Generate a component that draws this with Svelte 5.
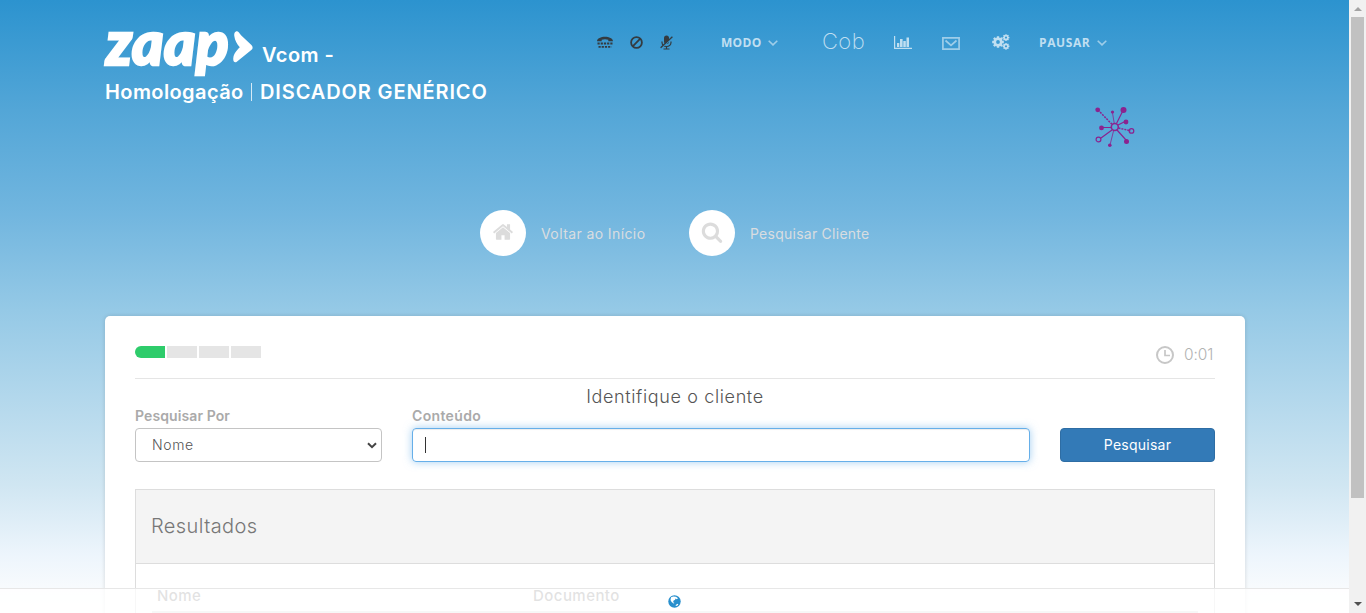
<script>
  const steps = [true, false, false, false];
  const teeth = [0, 45, 90, 135, 180, 225, 270, 315];
</script>

{#snippet chevron()}
  <svg class="chev" width="10" height="6" viewBox="0 0 10 6"><path d="M.7 .7 5 4.9 9.3 .7" fill="none" stroke="currentColor" stroke-width="1.6" /></svg>
{/snippet}

{#snippet gear(x, y, s)}
  <g transform="translate({x} {y}) scale({s})">
    {#each teeth as angle}
      <rect x="-1.25" y="-6" width="2.5" height="3" rx=".3" transform="rotate({angle})" />
    {/each}
    <circle r="3.3" fill="none" stroke="currentColor" stroke-width="2.7" />
  </g>
{/snippet}

<div class="window">
  <div class="page">
    <header>
      <div class="brand">
        <div class="line first">
          <span class="logo">zaap</span>
          <svg class="arrow" width="20" height="32" viewBox="0 0 20 32"><path d="M3 .4C1.400 1 1 3 1.300 5c.6 4.500 2.500 8 5.500 11.300C4 19 .8 22.500.300 27c-.4 3.500 1.400 5.200 3.500 3.700l14.500-11.600c1.800-1.500 1.700-3.400.1-5.100L8.300 4.400C6.300 2.200 5.100-.3 3 .4Z" fill="#fff" /></svg>
          <span class="vcom">Vcom -</span>
        </div>
        <div class="line second"><b class="homo">Homologação</b><i></i><b class="disc">DISCADOR GENÉRICO</b></div>
      </div>
      <div class="right">
        <nav>
          <svg class="dark tty" width="16" height="12" viewBox="0 0 16 12"><path d="M0 5.300C.1-.9 15.900-.9 16 5.300H11.300V3.700Q8 2.700 4.700 3.700V5.300Z" fill="currentColor" /><path d="M.5 7.500h15M1.500 10.900h13" stroke="currentColor" stroke-width="1.900" stroke-dasharray="2.200 1" /></svg>
          <svg class="dark ban" width="13" height="13" viewBox="0 0 13 13"><circle cx="6.500" cy="6.500" r="5.400" /><path d="m2.700 10.300 7.600-7.600" /></svg>
          <svg class="dark mic" width="13" height="15" viewBox="0 0 13 15"><rect x="4" y=".5" width="5" height="8.500" rx="2.500" fill="currentColor" /><path d="M2 6.500v1q.3 3.800 4.500 4 4.200-.2 4.500-4v-1M6.500 11.500V14M3.500 14h6" fill="none" stroke="currentColor" stroke-width="1.200" /><path d="m.6 13.500 12-11" stroke="#3998d0" stroke-width="1.500" /><path d="m.6 12.800 11.800-11" stroke="currentColor" stroke-width="1.300" /></svg>
          <span class="menu modo">MODO</span>{@render chevron()}
          <span class="cob">Cob</span>
          <svg class="chart" width="18" height="13" viewBox="0 0 18 13"><path d="M.6 0v12.400H18" fill="none" stroke="currentColor" stroke-width="1.200" /><path d="M3 7h2.300v4H3zM6 3h2.600v8H6zM9.300 5h2.500v6H9.300zM12.500 1.500H15V11h-2.500z" fill="currentColor" /></svg>
          <svg class="mail" width="18" height="13" viewBox="0 0 18 13"><path d="M.9.900h16.200v11.200H.9ZM3.500 3.500 9 8.300l5.500-4.800" fill="none" stroke="currentColor" stroke-width="1.700" /></svg>
          <svg class="cogs" width="18" height="16" viewBox="0 0 18 16" fill="currentColor">{@render gear(6, 8, .97)}{@render gear(14, 3.600, .57)}{@render gear(14, 12.300, .57)}</svg>
          <span class="menu pausar">PAUSAR</span>{@render chevron()}
        </nav>
        <svg class="network" width="42" height="42" viewBox="0 0 42 42" stroke="#8b238f" fill="#8b238f">
          <g fill="none" stroke-width="1.200">
            <path d="m22.500 17.500 6.500-13M24 19l7-3.500M23 24l9 10M18 24 7 32M17.500 21.500H8" />
            <path d="M20.200 17 18.500 7M19.500 25l-3.500 14" stroke-width=".8" />
            <path d="M18 18.300 4.500 4.500M24.500 22l12 2.800" stroke-width="1.500" stroke-dasharray="2 1" />
            <circle cx="20.800" cy="21" r="3.500" stroke-width="1.600" />
            <circle cx="4.500" cy="33.500" r="2.400" /><circle cx="37.500" cy="24.900" r="2.300" />
          </g>
          <g stroke="none"><circle cx="3.700" cy="3.800" r="2.400" /><circle cx="29.500" cy="4" r="3" /><circle cx="18.500" cy="6" r="1.600" /><circle cx="32" cy="16" r="2.400" /><circle cx="7.500" cy="21.900" r="2.400" /><circle cx="32.500" cy="35.500" r="2.500" /><circle cx="15.800" cy="39.300" r="1.800" /></g>
        </svg>
      </div>
    </header>

    <div class="actions">
      <a class="action"><span class="disk"><svg width="22" height="22" viewBox="0 0 1792 1792"><path d="M1472 992v480q0 26-19 45t-45 19h-384v-384h-256v384h-384q-26 0-45-19t-19-45v-480q0-1 .5-3t.5-3l575-474 575 474q1 2 1 6zm223-69l-62 74q-8 9-21 11h-3q-13 0-21-7l-692-577-692 577q-12 8-24 7-13-2-21-11l-62-74q-8-10-7-23.500t11-21.500l719-599q32-26 76-26t76 26l244 204v-195q0-14 9-23t23-9h192q14 0 23 9t9 23v408l219 182q10 8 11 21.500t-7 23.500z" /></svg></span><span class="voltar">Voltar ao Início</span></a>
      <a class="action"><span class="disk search"><svg width="22" height="22" viewBox="0 0 1792 1792"><path d="M1216 832q0-185-131.500-316.500t-316.500-131.500-316.500 131.500-131.500 316.500 131.500 316.500 316.500 131.500 316.500-131.500 131.500-316.500zm512 832q0 52-38 90t-90 38q-54 0-90-38l-343-342q-179 124-399 124-143 0-273.500-55.500t-225-150-150-225-55.500-273.500 55.500-273.500 150-225 225-150 273.500-55.500 273.500 55.500 225 150 150 225 55.500 273.500q0 220-124 399l343 343q37 37 37 90z" /></svg></span><span class="cliente">Pesquisar Cliente</span></a>
    </div>

    <main>
      <div class="top">
        <div class="steps">{#each steps as done}<span class:done></span>{/each}</div>
        <div class="timer"><svg width="18" height="18" viewBox="0 0 18 18" fill="none" stroke="#c7c7c7"><circle cx="9" cy="9" r="8" stroke-width="2" /><path d="M9 4v5.500h5" stroke-width="1.700" /></svg><span>0:01</span></div>
      </div>
      <h1>Identifique o cliente</h1>
      <form>
        <div class="field"><label for="by"><span class="por">Pesquisar Por</span></label><div class="control select" id="by"><span>Nome</span><svg width="10" height="7" viewBox="0 0 10 7"><path d="M1 1.200 5 5.200 9 1.200" fill="none" stroke="#444" stroke-width="2" /></svg></div></div>
        <div class="field"><label for="text"><span class="cont">Conteúdo</span></label><div class="control focus" id="text"><i></i></div></div>
        <button type="button"><span>Pesquisar</span></button>
      </form>
      <section>
        <h2><span>Resultados</span></h2>
        <div class="table"><div class="head"><span class="nome">Nome</span><span class="doc">Documento</span></div></div>
      </section>
    </main>
  </div>
  <div class="scroll"><i class="up"></i><div class="thumb"></div><i class="down"></i></div>
  <footer><svg width="13" height="13" viewBox="0 0 13 13"><circle cx="6.500" cy="6.500" r="6.200" fill="#288fcd" /><path d="M3 2.200 5.300 1.500 8 1.800l2 1.400-1.200 1-1.300-.6-.4 1.200-1.700.9-.2 1.500 1.300.9-.9.500-2-1.700L2.500 5ZM7.300 10.300l2.300-1.500.8.700-1.500 1.500Z" fill="#fff" /></svg></footer>
</div>

<style>
  :global(body) { margin: 0; overflow: hidden; }
  .window { position: relative; width: 1366px; height: 613px; display: flex; overflow: hidden; font-family: Inter, "Liberation Sans", sans-serif; }
  .window * { box-sizing: border-box; }
  span, b { white-space: nowrap; }
  svg { display: block; flex: none; }
  .page { width: 1349px; height: 613px; padding: 0 104px 0 105px; overflow: hidden; background: linear-gradient(#2c93cf 0, #53a6d7 110px, #72b6df 215px, #95c9e6 310px, #d0e6f2 485px, #edf5fc 555px, #f8fbfd 590px, #fff 613px); }
  header { display: flex; height: 210px; }
  .brand { width: 491px; color: #fff; }
  .line { display: flex; }
  .first { height: 82px; padding-top: 26px; }
  .logo { width: 127px; margin: -2px 0 0 1px; font: italic 900 60px/36px Lato, sans-serif; letter-spacing: .4px; -webkit-text-stroke: 2.500px #fff; stroke-linejoin: round; }
  .arrow { margin-top: 5px; }
  .vcom { margin: 17px 0 0 9px; font-size: 20px; line-height: 24px; font-weight: 600; letter-spacing: .45px; }
  .second { font-size: 20px; line-height: 20px; align-items: center; }
  .second b { font-weight: 600; }
  .homo { width: 146px; letter-spacing: .4px; }
  .disc { letter-spacing: .88px; }
  .second i { width: 1px; height: 18px; background: #d6eaf6; margin-right: 8px; }
  nav { display: flex; align-items: center; height: 30px; margin-top: 27px; color: #c0dff1; }
  .dark { color: #343b40; }
  .tty { margin-left: 1px; }
  .ban { margin-left: 17px; fill: none; stroke: currentColor; stroke-width: 1.800; }
  .mic { margin-left: 17px; }
  .menu { font: 700 12px "Open Sans", sans-serif; letter-spacing: .3px; }
  .modo { width: 47px; margin-left: 48px; }
  .cob { width: 72px; margin-left: 44px; font-size: 22px; font-weight: 250; line-height: 26px; letter-spacing: .4px; margin-top: -2px; }
  .mail { margin: 2px 0 0 30px; opacity: .75; }
  .cogs { margin-left: 32px; }
  .pausar { width: 58px; margin-left: 29px; letter-spacing: .6px; }
  .chev { opacity: .75; margin-top: 2px; }
  .network { margin: 49px 0 0 498px; }
  .actions { display: flex; height: 106px; padding-left: 375px; }
  .action { display: flex; align-items: flex-start; width: 209px; color: #d9dde0; font-size: 14px; line-height: 20px; }
  .action > span:last-child { margin: 14px 0 0 15px; }
  .voltar { letter-spacing: .4px; }
  .cliente { letter-spacing: .25px; }
  .disk { display: grid; place-items: center; width: 46px; height: 46px; border-radius: 50%; background: #fff; }
  .disk svg { fill: #dcdcdc; margin-top: -2px; }
  main { height: 400px; background: #fff; border-radius: 5px; padding: 0 30px; box-shadow: 0 0 4px rgba(0,0,0,.14); }
  .top { display: flex; justify-content: space-between; height: 63px; border-bottom: 1px solid #e5e5e5; padding-top: 30px; }
  .steps { display: flex; gap: 2px; }
  .steps span { width: 30px; height: 12px; background: #e5e5e5; }
  .steps .done { background: #2ecc6b; border-radius: 6px 0 0 6px; }
  .timer { display: flex; gap: 10px; height: 18px; align-items: center; color: #b2b2b2; font-size: 15.500px; font-weight: 300; line-height: 18px; }
  .timer span { width: 31px; letter-spacing: -.1px; }
  h1 { margin: 8px 0 0; height: 22px; line-height: 20px; font-size: 18px; font-weight: 300; color: #555; text-align: center; letter-spacing: .63px; }
  form { display: flex; height: 80px; }
  .field:first-child { width: 247px; margin-right: 30px; }
  .field:nth-child(2) { width: 618px; margin-right: 30px; }
  label { display: block; height: 19px; line-height: 13px; font-size: 14px; font-weight: 600; color: #aaa; letter-spacing: .1px; }
  .cont { letter-spacing: .35px; }
  .control { display: flex; align-items: center; height: 34px; border: 1px solid #c4c4c4; border-radius: 4px; color: #555; font-size: 14px; }
  .select { justify-content: space-between; padding: 0 4px 0 16px; font-weight: 300; letter-spacing: .6px; }
  .select span { margin-top: -1px; }
  .focus { padding-left: 12px; border-color: #66afe9; box-shadow: inset 0 1px 1px rgba(0,0,0,.075), 0 0 8px rgba(102,175,233,.6); }
  .focus i { width: 1px; height: 16px; background: #333; }
  button { width: 155px; height: 34px; margin: 19px 0 0; padding: 0 0 2px; border: 1px solid #2e6da4; border-radius: 4px; background: #337ab7; color: #fff; font: 14px Inter, sans-serif; letter-spacing: .25px; }
  section { height: 240px; border: 1px solid #ddd; }
  h2 { margin: 0; height: 74px; padding-left: 15px; background: #f4f4f4; border-bottom: 1px solid #ddd; font-size: 20px; font-weight: 300; line-height: 73px; color: #777; letter-spacing: .4px; }
  .table { padding: 16px 16px; }
  .head { display: flex; height: 33px; padding: 7px 5px 0; border-bottom: 2px solid #ddd; font-size: 15px; line-height: 18px; font-weight: 500; color: #888; letter-spacing: .45px; }
  .nome { width: 376px; }
  .scroll { display: flex; flex-direction: column; align-items: center; width: 17px; height: 613px; background: #f1f1f1; }
  .scroll i { width: 0; border: 4px solid transparent; flex: none; }
  .up { border-top: 0 !important; border-bottom-color: #a3a3a3 !important; margin-top: 7px; }
  .thumb { width: 13px; height: 481px; margin-top: 6px; background: #c1c1c1; }
  .down { border-bottom: 0 !important; border-top-color: #505050 !important; margin-top: 104px; }
  footer { position: absolute; left: 0; bottom: 0; width: 1349px; height: 25px; border-top: 1px solid #e7e7e7; background: rgba(255,255,255,.76); display: flex; justify-content: center; align-items: center; }
</style>
